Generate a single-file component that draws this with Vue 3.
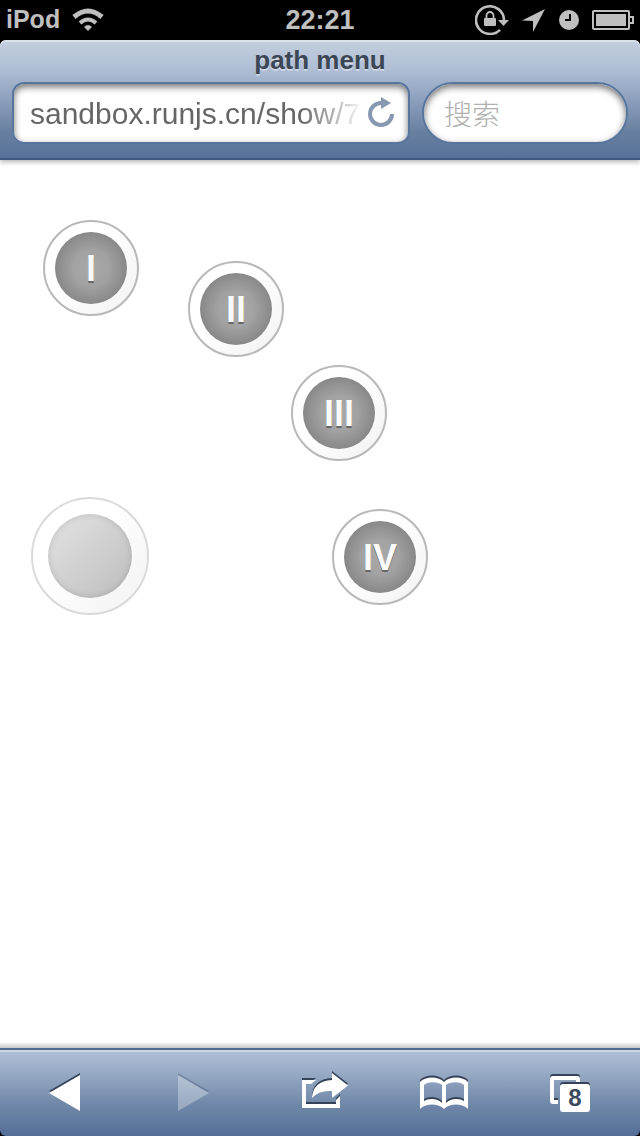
<script setup>
import { ref } from 'vue'

const address = ref('sandbox.runjs.cn/show/7')
const search = ref('')
const items = [
  { label: 'I', place: 'first' },
  { label: 'II', place: 'second' },
  { label: 'III', place: 'third' },
  { label: 'IV', place: 'fourth' }
]
</script>

<template>
  <div class="phone">
    <div class="status">
      <div class="status-left">
        <span class="device">iPod</span>
        <svg class="wifi" width="32" height="24" viewBox="0 0 32 24" aria-hidden="true">
          <path d="M2 9Q16 -3 30 9" fill="none" stroke="currentColor" stroke-width="5" />
          <path d="M8 15Q16 8 24 15" fill="none" stroke="currentColor" stroke-width="4" />
          <path d="M12 19Q16 15 20 19L16 23Z" fill="currentColor" />
        </svg>
      </div>
      <span class="time">22:21</span>
      <div class="status-right">
        <svg width="34" height="30" viewBox="0 0 34 30" aria-hidden="true">
          <path d="M29 15A14 13.8 0 1 0 25 24.8" fill="none" stroke="currentColor" stroke-width="2.6" />
          <path d="M23 15H34L28.5 21Z" fill="currentColor" />
          <rect x="9" y="13" width="12" height="8" rx="1" fill="currentColor" />
          <path d="M11.5 13V10.5a3.5 3.5 0 0 1 7 0V13" fill="none" stroke="currentColor" stroke-width="1.8" />
        </svg>
        <svg width="24" height="24" viewBox="0 0 24 24" aria-hidden="true">
          <path d="M23 1L0 12.5L11 13V24Z" fill="currentColor" />
        </svg>
        <svg width="20" height="20" viewBox="0 0 20 20" aria-hidden="true">
          <circle cx="10" cy="10" r="10" fill="currentColor" />
          <path d="M11 4V10H6" fill="none" stroke="#000" stroke-width="2" />
        </svg>
        <svg width="42" height="20" viewBox="0 0 42 20" aria-hidden="true">
          <rect x="1" y="1" width="36" height="18" rx="1" fill="none" stroke="currentColor" stroke-width="2" />
          <rect x="4" y="4" width="30" height="12" fill="currentColor" />
          <path d="M38 7H41V13H38" fill="none" stroke="currentColor" stroke-width="2" />
        </svg>
      </div>
    </div>

    <header class="browser">
      <h1>path menu</h1>
      <div class="fields">
        <div class="field address">
          <input v-model="address" type="text" aria-label="Address" />
          <button class="reload" aria-label="Reload">
            <svg width="28" height="32" viewBox="0 0 28 32" aria-hidden="true">
              <path d="M25 17A11 11 0 1 1 14 6" fill="none" stroke="currentColor" stroke-width="4" />
              <path d="M14 0L24 6L14 12Z" fill="currentColor" />
            </svg>
          </button>
        </div>
        <div class="field search">
          <input v-model="search" type="text" placeholder="搜索" aria-label="搜索" />
        </div>
      </div>
    </header>

    <main class="canvas">
      <button
        v-for="item in items"
        :key="item.label"
        class="ring item"
        :class="item.place"
      >
        <span class="disc">{{ item.label }}</span>
      </button>
      <button class="ring trigger" aria-label="Menu"><span class="disc"></span></button>
    </main>

    <nav class="toolbar">
      <button aria-label="Back">
        <svg width="80" height="56" viewBox="0 0 80 56"><path d="M56 10V46L25 28Z" /></svg>
      </button>
      <button class="dim" aria-label="Forward" disabled>
        <svg width="80" height="56" viewBox="0 0 80 56"><path d="M26 10V46L57 28Z" /></svg>
      </button>
      <button aria-label="Share">
        <svg width="80" height="56" viewBox="0 0 80 56">
          <path d="M22 15H36L31 19H26V39H56V35L60 31V43H22Z" />
          <path d="M52 8L68 20.5L52 33V26Q39 25 32 33Q33 16 52 15Z" />
        </svg>
      </button>
      <button aria-label="Bookmarks">
        <svg width="80" height="56" viewBox="0 0 80 56">
          <path
            fill-rule="evenodd"
            d="M12 17C17 11 31 11 36 17C41 11 55 11 60 17V44C55 38 41 38 36 44C31 38 17 38 12 44Z
               M16 20V36C20 33 30 33 34 38V20C30 17 21 16 16 20Z
               M38 20V38C42 33 52 33 56 36V20C51 16 42 17 38 20Z"
          />
        </svg>
      </button>
      <button aria-label="Tabs">
        <svg width="80" height="56" viewBox="0 0 80 56">
          <path d="M22 39H17Q14 39 14 36V14Q14 11 17 11H41Q44 11 44 14V17H40V15H18V35H22Z" />
          <rect x="24" y="19" width="30" height="28" rx="3" />
          <text x="39" y="41" text-anchor="middle">8</text>
        </svg>
      </button>
    </nav>
  </div>
</template>

<style>
body {
  background: #000;
}
</style>

<style scoped>
.phone {
  display: flex;
  flex-direction: column;
  min-height: 100vh;
  background: #000;
  font-family: "Liberation Sans", "Noto Sans CJK SC", sans-serif;
}
button {
  border: 0;
  padding: 0;
  background: none;
  font: inherit;
}
svg {
  display: block;
}
.status {
  display: grid;
  grid-template-columns: 1fr auto 1fr;
  align-items: center;
  height: 40px;
  padding: 0 6px;
  color: #bfbfbf;
  font-weight: bold;
}
.status-left,
.status-right {
  display: flex;
  align-items: center;
}
.status-left {
  gap: 12px;
}
.status-right {
  justify-content: flex-end;
  gap: 13px;
}
.device {
  font-size: 25px;
  line-height: 26px;
  padding-bottom: 2px;
}
.time {
  font-size: 27px;
}
.browser {
  box-sizing: border-box;
  height: 120px;
  padding: 5px 12px 0;
  border-bottom: 2px solid #3d5a84;
  border-radius: 6px 6px 0 0;
  background: linear-gradient(#c3cfde 0, #b0bfd5 28px, #8397b6 68px, #68809f 92px, #56719a 118px);
  box-shadow: inset 0 2px 0 #d9e1ea, 0 2px 5px rgba(0, 0, 0, 0.3);
  z-index: 1;
}
h1 {
  margin: 0;
  color: #3b4755;
  font-size: 26px;
  line-height: 30px;
  text-align: center;
  text-shadow: 0 2px 0 rgba(255, 255, 255, 0.4);
}
.fields {
  display: grid;
  grid-template-columns: 398fr 206fr;
  gap: 12px;
  margin-top: 7px;
}
.field {
  box-sizing: border-box;
  display: flex;
  align-items: center;
  height: 62px;
  min-width: 0;
  border: 2px solid #58759d;
  background: #fff;
  box-shadow: inset 0 3px 7px rgba(0, 0, 0, 0.55);
}
.address {
  padding: 0 13px 0 16px;
  border-radius: 12px;
}
.search {
  padding: 0 20px;
  border-radius: 31px;
}
input {
  flex: 1;
  min-width: 0;
  padding: 2px 0 0;
  border: 0;
  outline: 0;
  background: none;
  color: #666;
  font: 30px "Liberation Sans", "Noto Sans CJK SC", sans-serif;
}
.address input {
  mask-image: linear-gradient(to right, #000 calc(100% - 66px), rgba(0, 0, 0, 0.25) calc(100% - 18px), transparent calc(100% - 4px));
}
.search input {
  padding-top: 5px;
  font-size: 28px;
}
input::placeholder {
  color: #b0b0b0;
  font-weight: 300;
  opacity: 1;
}
.reload {
  color: #8799b0;
}
.canvas {
  position: relative;
  flex: 1;
  background: linear-gradient(#fff calc(100% - 6px), #c8c8c8);
}
.ring {
  position: absolute;
  display: flex;
  box-sizing: border-box;
  border: 2px solid #b8b8b8;
  border-radius: 50%;
  background: linear-gradient(135deg, #fff 40%, #f2f2f2);
}
.item {
  width: 96px;
  height: 96px;
  padding: 10px;
}
.disc {
  flex: 1;
  align-self: stretch;
  border-radius: 50%;
}
.item .disc {
  background: radial-gradient(closest-side, #a9a9a9 0, #a2a2a2 50%, #888 100%);
  color: #fafafa;
  font-size: 36px;
  font-weight: bold;
  line-height: 74px;
  text-align: center;
  text-shadow: 0 2px 0 #666;
}
.first {
  left: 43px;
  top: 60px;
}
.second {
  left: 188px;
  top: 101px;
}
.third {
  left: 291px;
  top: 205px;
}
.fourth {
  left: 332px;
  top: 349px;
}
.trigger {
  left: 31px;
  top: 337px;
  width: 118px;
  height: 118px;
  padding: 15px;
  border-color: #dadada;
}
.trigger .disc {
  background: linear-gradient(135deg, #e4e4e4, #bdbdbd);
  box-shadow: inset 0 0 7px rgba(0, 0, 0, 0.14);
}
.toolbar {
  box-sizing: border-box;
  display: grid;
  grid-template-columns: repeat(5, 1fr);
  height: 88px;
  border-top: 2px solid #526d90;
  border-radius: 0 0 6px 6px;
  background: linear-gradient(#b1c0d7, #96a9c3 24px, #7088a9 54px, #546e98 86px);
  box-shadow: inset 0 2px 0 #cdd7e3;
}
.toolbar button {
  display: flex;
  align-items: center;
  justify-content: center;
}
.toolbar svg {
  fill: #fff;
}
.toolbar path,
.toolbar rect {
  filter: drop-shadow(0 -2px 0 #35435a);
}
.dim svg {
  opacity: 0.3;
}
.toolbar text {
  fill: #3d4b5d;
  font-size: 24px;
  font-weight: bold;
}
</style>
